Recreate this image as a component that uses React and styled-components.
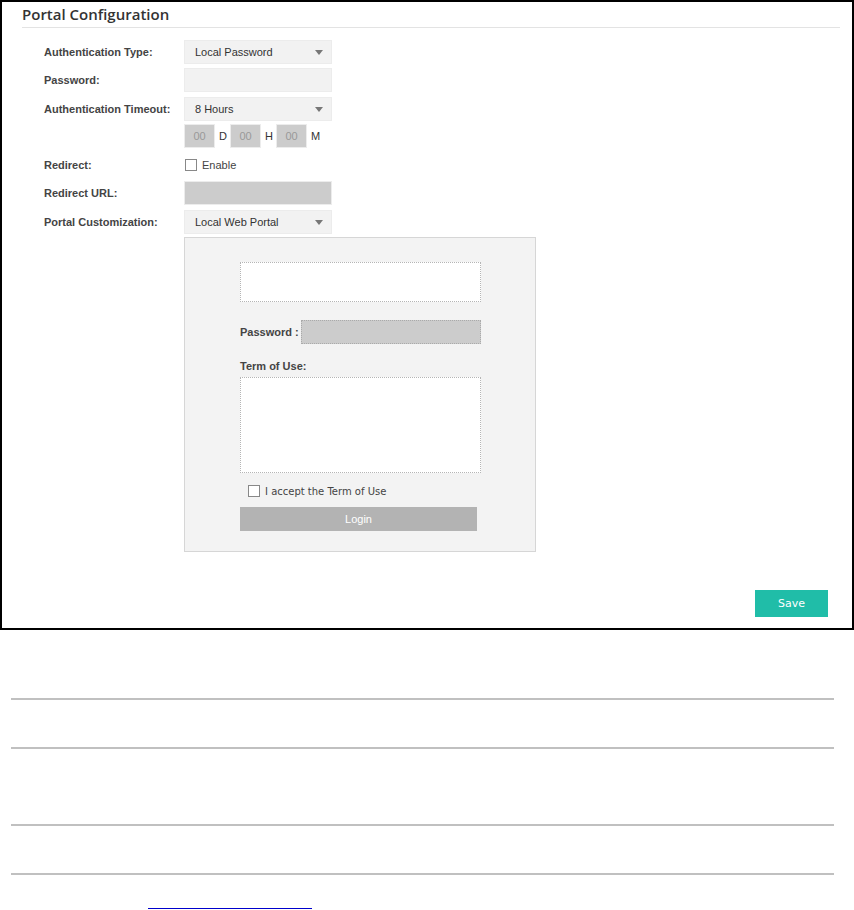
import React from 'react';
import styled, { createGlobalStyle } from 'styled-components';

const GlobalStyle = createGlobalStyle`
    body {
        margin: 0;
        background: #fff;
        font-family: "Liberation Sans", Arial, sans-serif;
        color: #333;
    }
`;

const Frame = styled.div`
    width: 854px;
    height: 630px;
    box-sizing: border-box;
    border: 2px solid #000;
    padding: 0 12px 0 20px;
    display: flex;
    flex-direction: column;
`;

const Title = styled.div`
    height: 25px;
    line-height: 24px;
    border-bottom: 1px solid #e3e3e3;
    font-family: "Open Sans", sans-serif;
    font-weight: 600;
    font-size: 15px;
    color: #333;
`;

const Form = styled.div`
    display: flex;
    flex-direction: column;
    gap: 4px;
    margin-top: 12px;
    padding-left: 22px;
`;

const Row = styled.div`
    display: flex;
    align-items: center;
    height: 24px;
    margin-top: ${(p) => p.$mt || 0}px;
`;

const Label = styled.div`
    width: 140px;
    flex-shrink: 0;
    font-size: 11px;
    font-weight: bold;
    color: #444;
`;

const Select = styled.div`
    width: 148px;
    height: 24px;
    box-sizing: border-box;
    background: #f2f2f2;
    border: 1px solid #ececec;
    display: flex;
    align-items: center;
    justify-content: space-between;
    padding: 0 8px 0 10px;
    font-size: 11px;
    color: #333;
`;

const Arrow = styled.span`
    width: 0;
    height: 0;
    border-left: 4px solid transparent;
    border-right: 4px solid transparent;
    border-top: 5px solid #777;
`;

const Input = styled.div`
    width: ${(p) => p.$w || 148}px;
    height: 24px;
    box-sizing: border-box;
    background: ${(p) => (p.$disabled ? '#cccccc' : '#f2f2f2')};
    border: 1px ${(p) => (p.$dotted ? 'dotted #aaa' : 'solid #ececec')};
    display: flex;
    align-items: center;
    justify-content: center;
    font-size: 11px;
    color: #999;
`;

const Unit = styled.span`
    font-size: 11px;
    color: #333;
    width: 15px;
    padding-left: 4px;
    box-sizing: border-box;
`;

const Check = styled.span`
    width: 12px;
    height: 12px;
    box-sizing: border-box;
    border: 1px solid #888;
    background: #fff;
    margin: 0 5px 0 1px;
`;

const CheckText = styled.span`
    font-size: ${(p) => p.$size || 11}px;
    color: #444;
    font-family: ${(p) => (p.$dejavu ? '"DejaVu Sans", sans-serif' : 'inherit')};
`;

const Panel = styled.div`
    margin-left: 140px;
    margin-top: -1px;
    width: 352px;
    height: 315px;
    box-sizing: border-box;
    background: #f3f3f3;
    border: 1px solid #d6d6d6;
    padding: 24px 0 0 55px;
    display: flex;
    flex-direction: column;
`;

const Box = styled.div`
    width: 241px;
    height: ${(p) => p.$h}px;
    box-sizing: border-box;
    background: #fff;
    border: 1px dotted #b5b5b5;
    margin-top: ${(p) => p.$mt || 0}px;
`;

const PwRow = styled.div`
    display: flex;
    align-items: center;
    margin-top: 18px;
    width: 241px;
    justify-content: space-between;
`;

const SmallLabel = styled.div`
    font-size: 11px;
    font-weight: bold;
    color: #444;
    margin-top: ${(p) => p.$mt || 0}px;
`;

const AcceptRow = styled.div`
    display: flex;
    align-items: center;
    margin-top: 11px;
    padding-left: 7px;
    height: 14px;
`;

const LoginButton = styled.div`
    width: 237px;
    height: 24px;
    margin-top: 9px;
    background: #b3b3b3;
    color: #fff;
    font-size: 11px;
    display: flex;
    align-items: center;
    justify-content: center;
`;

const Footer = styled.div`
    display: flex;
    justify-content: flex-end;
    margin-top: auto;
    padding: 0 12px 11px 0;
`;

const SaveButton = styled.button`
    width: 73px;
    height: 27px;
    border: none;
    background: #20bda8;
    color: #fff;
    font-family: "DejaVu Sans", sans-serif;
    font-size: 11px;
    cursor: pointer;
`;

const Lower = styled.div`
    padding-left: 11px;
    width: 823px;
`;

const Rule = styled.div`
    height: 2px;
    background: #c0c0c0;
    margin-top: ${(p) => p.$mt}px;
`;

const Link = styled.a`
    display: block;
    margin: 33px 0 0 137px;
    width: 164px;
    height: 0;
    border-bottom: 1px solid #0000cc;
`;

const App = () => {
    return (
        <>
            <GlobalStyle />
            <Frame>
                <Title>Portal Configuration</Title>
                <Form>
                    <Row>
                        <Label>Authentication Type:</Label>
                        <Select>Local Password<Arrow /></Select>
                    </Row>
                    <Row>
                        <Label>Password:</Label>
                        <Input />
                    </Row>
                    <Row $mt={1}>
                        <Label>Authentication Timeout:</Label>
                        <Select>8 Hours<Arrow /></Select>
                    </Row>
                    <Row $mt={-1}>
                        <Label />
                        <Input $w={31} $disabled>00</Input><Unit>D</Unit>
                        <Input $w={31} $disabled>00</Input><Unit>H</Unit>
                        <Input $w={31} $disabled>00</Input><Unit>M</Unit>
                    </Row>
                    <Row $mt={1}>
                        <Label>Redirect:</Label>
                        <Check />
                        <CheckText>Enable</CheckText>
                    </Row>
                    <Row>
                        <Label>Redirect URL:</Label>
                        <Input $disabled />
                    </Row>
                    <Row $mt={1}>
                        <Label>Portal Customization:</Label>
                        <Select>Local Web Portal<Arrow /></Select>
                    </Row>
                    <Panel>
                        <Box $h={40} />
                        <PwRow>
                            <SmallLabel>Password :</SmallLabel>
                            <Input $w={180} $disabled $dotted />
                        </PwRow>
                        <SmallLabel $mt={16}>Term of Use:</SmallLabel>
                        <Box $h={96} $mt={5} />
                        <AcceptRow>
                            <Check />
                            <CheckText $size={10} $dejavu>I accept the Term of Use</CheckText>
                        </AcceptRow>
                        <LoginButton>Login</LoginButton>
                    </Panel>
                </Form>
                <Footer>
                    <SaveButton>Save</SaveButton>
                </Footer>
            </Frame>
            <Lower>
                <Rule $mt={68} />
                <Rule $mt={47} />
                <Rule $mt={75} />
                <Rule $mt={47} />
                <Link href="#" />
            </Lower>
        </>
    );
};

export default App;
